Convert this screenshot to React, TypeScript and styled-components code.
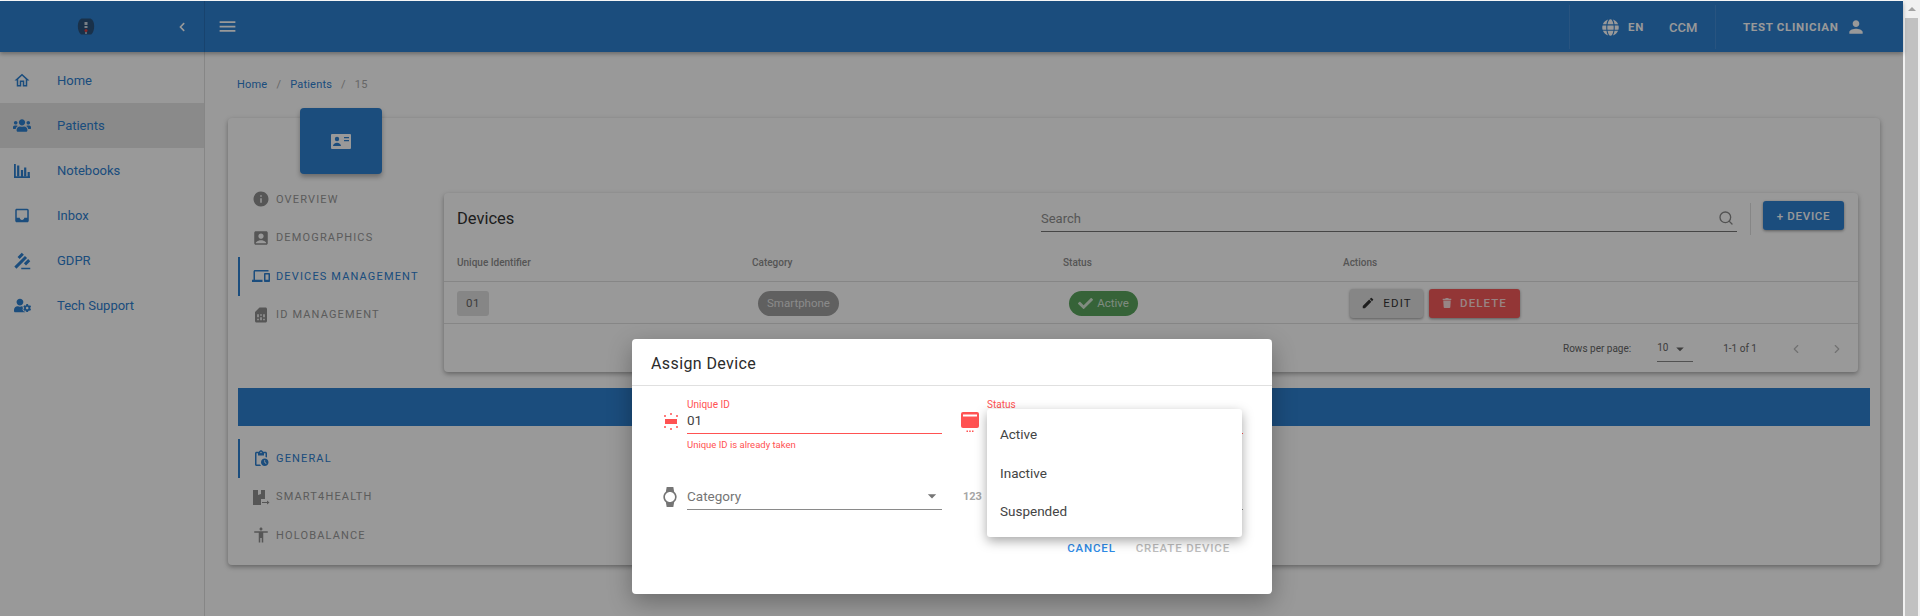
import React from "react";
import styled, { createGlobalStyle } from "styled-components";
import {
  MdMenu, MdPerson, MdOutlineHome, MdInbox, MdGavel, MdInfo, MdAccountBox,
  MdDevices, MdSimCard, MdOutlinePendingActions, MdAccessibility, MdWatch, MdEdit, MdArrowDropDown,
} from "react-icons/md";
import { FaGlobe, FaUsers, FaUserCog, FaTrash, FaCheck, FaChevronLeft } from "react-icons/fa";
import { FiChevronLeft, FiChevronRight, FiSearch } from "react-icons/fi";

const BLUE = "#2e80d1";

const Global = createGlobalStyle`
  html, body { margin: 0; padding: 0; height: 616px; overflow: hidden; background: #fff; }
  body { font-family: Roboto, "Liberation Sans", sans-serif; }
  * { box-sizing: border-box; }
`;

const Screen = styled.div`
  display: flex;
  width: 1920px;
  height: 616px;
  position: relative;
  overflow: hidden;
`;
const Viewport = styled.div`
  width: 1903px;
  height: 616px;
  position: relative;
  padding-top: 1px;
  background: #fff;
  display: flex;
  flex-direction: column;
`;
const ScrollTrack = styled.div`
  width: 17px;
  background: #f1f1f1;
  display: flex;
  flex-direction: column;
  align-items: center;
`;
const ScrollUp = styled.div`
  width: 17px;
  height: 18px;
  display: flex;
  align-items: center;
  justify-content: center;
  &::before {
    content: "";
    border-left: 4px solid transparent;
    border-right: 4px solid transparent;
    border-bottom: 4px solid #a3a3a3;
  }
`;
const ScrollThumb = styled.div`
  width: 13px;
  flex: 1;
  background: #c1c1c1;
`;

const TopBar = styled.header`
  height: 51px;
  background: ${BLUE};
  display: flex;
  align-items: stretch;
  padding-right: 27px;
  box-shadow: 0 2px 4px rgba(0, 0, 0, 0.3);
  position: relative;
  z-index: 1;
  flex: none;
`;
const Brand = styled.div`
  width: 205px;
  border-right: 1px solid rgba(0, 0, 0, 0.12);
  display: flex;
  align-items: center;
  padding-left: 77px;
  padding-right: 17px;
  justify-content: space-between;
  color: #fff;
`;
const MenuBtn = styled.div`
  display: flex;
  align-items: center;
  padding-left: 12px;
  color: #fff;
  flex: 1;
`;
const TopSection = styled.div<{ $w: number }>`
  width: ${(p) => p.$w}px;
  margin: 4px 0 3px;
  border-left: 1px solid rgba(255, 255, 255, 0.1);
  display: flex;
  align-items: center;
  color: #fff;
  font-size: 11.5px;
  font-weight: 700;
  letter-spacing: 0.7px;
`;
const LangGroup = styled.div`
  display: flex;
  align-items: center;
  gap: 9px;
  margin-left: 32px;
`;
const CcmLabel = styled.span`
  margin-left: 25px;
  font-size: 13px;
  letter-spacing: 0;
  font-weight: 500;
`;
const UserGroup = styled.div`
  display: flex;
  align-items: center;
  gap: 7px;
  margin-left: 27px;
`;

const Body = styled.div`
  display: flex;
  flex: 1;
  min-height: 0;
`;
const Sidebar = styled.nav`
  width: 205px;
  flex: none;
  border-right: 1px solid rgba(0, 0, 0, 0.12);
  padding-top: 6px;
`;
const SideItem = styled.div<{ $active?: boolean }>`
  height: 45px;
  display: flex;
  align-items: center;
  padding-left: 13px;
  gap: 19px;
  color: ${BLUE};
  font-size: 13px;
  background: ${(p) => (p.$active ? "#e6e6e6" : "transparent")};
`;
const SideIcon = styled.span`
  width: 18px;
  height: 18px;
  display: flex;
  align-items: center;
  justify-content: center;
  flex: none;
  margin-right: 7px;
`;
const GavelIcon = styled(MdGavel)`
  transform: scaleX(-1);
`;
const Main = styled.main`
  flex: 1;
  padding: 0 23px;
  min-width: 0;
`;
const Crumbs = styled.div`
  display: flex;
  height: 66px;
  align-items: center;
  padding: 0 0 2px 9px;
  font-size: 11px;
  letter-spacing: 0.2px;
  gap: 9px;
  color: ${BLUE};
`;
const CrumbMuted = styled.span`
  color: #aaa;
`;
const Card = styled.section`
  display: flow-root;
  background: #fff;
  border-radius: 4px;
  box-shadow: 0 2px 5px rgba(0, 0, 0, 0.35);
  padding: 0 10px 12px;
  height: 447px;
`;
const Tile = styled.div`
  width: 82px;
  height: 66px;
  margin: -10px 0 0 62px;
  background: ${BLUE};
  border-radius: 4px;
  box-shadow: 0 3px 5px rgba(0, 0, 0, 0.3);
  display: flex;
  align-items: center;
  justify-content: center;
`;
const Split = styled.div`
  display: flex;
  margin-top: 6px;
  height: 192px;
`;
const TabCol = styled.div`
  width: 206px;
  flex: none;
`;
const Tab = styled.div<{ $active?: boolean }>`
  height: 38.5px;
  display: flex;
  align-items: center;
  border-left: 2px solid ${(p) => (p.$active ? BLUE : "transparent")};
  padding-left: 12px;
  gap: 6px;
  font-size: 11px;
  font-weight: 400;
  letter-spacing: 1.15px;
  color: ${(p) => (p.$active ? BLUE : "#999")};
`;
const TabIcon = styled.span<{ $active?: boolean }>`
  width: 18px;
  height: 18px;
  font-size: 18px;
  display: flex;
  align-items: center;
  justify-content: center;
  flex: none;
  color: ${(p) => (p.$active ? BLUE : "#8f8f8f")};
`;
const Panel = styled.div`
  width: 1414px;
  margin-top: 13px;
  height: 179px;
  background: #fff;
  border-radius: 4px;
  box-shadow: 0 2px 5px rgba(0, 0, 0, 0.35);
`;
const PanelBar = styled.div`
  height: 52px;
  display: flex;
  align-items: flex-start;
  padding-left: 13px;
`;
const PanelTitle = styled.div`
  width: 584px;
  font-size: 16.5px;
  color: #333;
  padding-top: 16px;
`;
const SearchBox = styled.div`
  width: 696px;
  height: 31px;
  margin-top: 8px;
  border-bottom: 1px solid #757575;
  display: flex;
  align-items: center;
  justify-content: space-between;
  font-size: 13px;
  color: #8f8f8f;
  padding-top: 4px;
  padding-right: 3px;
`;
const SearchIcon = styled(FiSearch)`
  color: #8a8a8a;
`;
const VRule = styled.div`
  width: 1px;
  height: 32px;
  background: #e0e0e0;
  margin: 10px 12px 0 13px;
`;
const AddBtn = styled.div`
  width: 81px;
  height: 29px;
  margin-top: 8px;
  background: ${BLUE};
  color: #fff;
  border-radius: 3px;
  box-shadow: 0 1px 3px rgba(0, 0, 0, 0.4);
  font-size: 11.5px;
  font-weight: 500;
  letter-spacing: 0.7px;
  display: flex;
  align-items: center;
  justify-content: center;
`;
const Row = styled.div<{ $h: number; $pt?: number; $pb?: number }>`
  height: ${(p) => p.$h}px;
  padding-top: ${(p) => p.$pt ?? 0}px;
  padding-bottom: ${(p) => p.$pb ?? 0}px;
  display: grid;
  grid-template-columns: 295px 311px 280px 1fr;
  align-items: center;
  padding-left: 13px;
  border-bottom: 1px solid #e0e0e0;
`;
const HeadCell = styled.div`
  font-size: 10px;
  font-weight: 500;
  color: #8e8e8e;
`;
const IdChip = styled.div`
  width: 32px;
  height: 25px;
  background: #e0e0e0;
  border-radius: 3px;
  color: #666;
  font-size: 11.5px;
  display: flex;
  align-items: center;
  justify-content: center;
  letter-spacing: 0.5px;
`;
const Pill = styled.div<{ $bg: string; $w: number }>`
  width: ${(p) => p.$w}px;
  height: 25px;
  margin-left: 6px;
  border-radius: 13px;
  background: ${(p) => p.$bg};
  color: rgba(255, 255, 255, 0.75);
  font-size: 11.5px;
  display: flex;
  align-items: center;
  justify-content: center;
  gap: 4px;
`;
const Actions = styled.div`
  display: flex;
  gap: 6px;
  margin-left: 7px;
`;
const ActionBtn = styled.div<{ $bg: string; $fg: string; $w: number; $weight?: number }>`
  width: ${(p) => p.$w}px;
  height: 29px;
  border-radius: 3px;
  background: ${(p) => p.$bg};
  color: ${(p) => p.$fg};
  box-shadow: 0 1px 3px rgba(0, 0, 0, 0.4);
  font-size: 11.5px;
  font-weight: ${(p) => p.$weight ?? 400};
  letter-spacing: 1.1px;
  display: flex;
  align-items: center;
  justify-content: center;
  gap: 8px;
`;
const Pager = styled.div`
  height: 47px;
  display: flex;
  align-items: center;
  padding-left: 1119px;
  padding-top: 2px;
  font-size: 10px;
  color: #666;
  position: relative;
`;
const PageSize = styled.div`
  margin-left: 26px;
  width: 36px;
  height: 26px;
  padding-top: 6px;
  border-bottom: 1px solid #888;
  display: flex;
  gap: 3px;
  align-items: flex-start;
`;
const SizeCaret = styled(MdArrowDropDown)`
  margin-top: -2px;
`;
const PageRange = styled.span`
  margin-left: 30px;
`;
const PageArrow = styled.span<{ $gap: number }>`
  margin-left: ${(p) => p.$gap}px;
  display: flex;
  color: #bdbdbd;
`;
const Band = styled.div`
  height: 38px;
  margin-top: 16px;
  background: ${BLUE};
`;
const BottomTabs = styled.div`
  padding-top: 13px;
`;

const Backdrop = styled.div`
  position: absolute;
  inset: 1px 0 0 0;
  z-index: 5;
  background: rgba(0, 0, 0, 0.4);
`;
const Dialog = styled.div`
  position: absolute;
  z-index: 6;
  left: 632px;
  top: 339px;
  width: 640px;
  height: 255px;
  background: #fff;
  border-radius: 4px;
  box-shadow: 0 8px 24px rgba(0, 0, 0, 0.3);
`;
const DialogTitle = styled.div`
  height: 47px;
  border-bottom: 1px solid #e0e0e0;
  padding: 2px 19px 0;
  display: flex;
  align-items: center;
  font-size: 16px;
  font-weight: 400;
  letter-spacing: 0.4px;
  color: #2b2b2b;
`;
const FormGrid = styled.div`
  display: grid;
  grid-template-columns: 255px 256px;
  column-gap: 45px;
  padding: 12px 0 0 55px;
`;
const Field = styled.div<{ $h: number }>`
  position: relative;
  height: ${(p) => p.$h}px;
`;
const FieldIcon = styled.span<{ $top: number; $left: number; $color?: string }>`
  position: absolute;
  left: ${(p) => p.$left}px;
  top: ${(p) => p.$top}px;
  color: ${(p) => p.$color || "#757575"};
  display: flex;
`;
const DigitsIcon = styled(FieldIcon)`
  font-size: 11px;
  font-weight: 700;
  color: #a6a6a6;
`;
const FieldLabel = styled.div`
  height: 13px;
  font-size: 10px;
  line-height: 13px;
  color: #ff5252;
`;
const FieldValue = styled.div<{ $error?: boolean; $muted?: boolean }>`
  height: 23px;
  border-bottom: 1px solid ${(p) => (p.$error ? "#ff5252" : "#8a8a8a")};
  font-size: 13.5px;
  color: ${(p) => (p.$muted ? "#757575" : "#444")};
  display: flex;
  align-items: center;
  justify-content: space-between;
  padding-bottom: 4px;
`;
const FieldError = styled.div`
  font-size: 9.5px;
  color: #ff5252;
  margin-top: 5px;
`;
const DialogActions = styled.div`
  position: absolute;
  right: 42px;
  top: 202px;
  display: flex;
  gap: 20px;
  font-size: 11.5px;
  font-weight: 500;
  letter-spacing: 0.85px;
`;
const ActionLink = styled.span<{ $on?: boolean }>`
  color: ${(p) => (p.$on ? "#2f8be6" : "#bdbdbd")};
`;
const Menu = styled.div`
  position: absolute;
  z-index: 7;
  left: 987px;
  top: 409px;
  width: 255px;
  height: 128px;
  padding-top: 6px;
  background: #fff;
  border-radius: 3px;
  box-shadow: 0 4px 12px rgba(0, 0, 0, 0.35);
`;
const MenuItem = styled.div`
  height: 38.5px;
  display: flex;
  align-items: center;
  padding-left: 13px;
  font-size: 13.5px;
  color: #444;
`;

const Logo = () => (
  <svg width="18" height="17" viewBox="0 0 17 17">
    <path d="M4 .5h9c2 .8 3.700 3.500 3.700 7.500s-1 6.500-3 8.500H3.500c-2-2-3.200-4.500-3.200-8.500S2 1.300 4 .5z" fill="#2a527c" />
    <path d="M7 4h3v3H7zM7 8h3v2H7z" fill="#c8d4e0" />
    <circle cx="8.500" cy="12.500" r="1.500" fill="#e04040" />
    <rect x="7.800" y="14" width="1.400" height="2" fill="#c8d4e0" />
  </svg>
);
const IdCardGlyph = () => (
  <svg width="20" height="15" viewBox="0 0 20 15" fill="#fff">
    <path fillRule="evenodd" d="M1 0h18a1 1 0 0 1 1 1v13a1 1 0 0 1-1 1H1a1 1 0 0 1-1-1V1a1 1 0 0 1 1-1zm12 3v1.200h5V3zm0 3v1.200h5V6z" />
    <circle cx="6" cy="5" r="2.200" fill={BLUE} />
    <path d="M2 12c0-2 2-3.300 4-3.300s4 1.300 4 3.300z" fill={BLUE} />
  </svg>
);
const ChartGlyph = () => (
  <svg width="16" height="14" viewBox="0 0 16 14" fill="currentColor">
    <rect x="0" y="0" width="1.800" height="14" />
    <rect x="0" y="12.300" width="16" height="1.700" />
    <rect x="3.100" y="1.500" width="2.200" height="11" />
    <rect x="6.900" y="6" width="2.200" height="7" />
    <rect x="10.100" y="3.500" width="2.200" height="9" />
    <rect x="13.600" y="8" width="2.200" height="5" />
  </svg>
);
const PhoneGlyph = () => (
  <svg width="18" height="18" viewBox="0 0 18 18" fill="currentColor">
    <path d="M1 2h5v5l3-1V2h4v9H9v6H1z" />
    <path d="M10 14h5v-1.500l2.500 2-2.500 2V15h-5z" />
  </svg>
);
const IdMarker = () => (
  <svg width="14" height="18" viewBox="0 0 14 18" fill="currentColor">
    <rect x="1" y="6" width="12" height="5" />
    <g opacity="0.75">
      <rect x="6" y="0" width="2" height="2" />
      <rect x="6" y="15" width="2" height="2" />
      <rect x="0" y="2" width="2" height="2" />
      <rect x="12" y="2" width="2" height="2" />
      <rect x="0" y="13" width="2" height="2" />
      <rect x="12" y="13" width="2" height="2" />
    </g>
  </svg>
);
const StatusMarker = () => (
  <svg width="18" height="21" viewBox="0 0 18 21" fill="currentColor">
    <rect x="0" y="0" width="18" height="16" rx="2" />
    <rect x="2" y="2.500" width="14" height="2" fill="#fff" />
    <rect x="5.500" y="18.500" width="1.500" height="1.500" />
    <rect x="8.200" y="18.500" width="1.500" height="1.500" />
    <rect x="11" y="18.500" width="1.500" height="1.500" />
  </svg>
);

const nav = [
  { label: "Home", icon: <MdOutlineHome size={21} /> },
  { label: "Patients", icon: <FaUsers size={19} />, active: true },
  { label: "Notebooks", icon: <ChartGlyph /> },
  { label: "Inbox", icon: <MdInbox size={19} /> },
  { label: "GDPR", icon: <GavelIcon size={18} /> },
  { label: "Tech Support", icon: <FaUserCog size={17} /> },
];
const topTabs = [
  { label: "OVERVIEW", icon: <MdInfo /> },
  { label: "DEMOGRAPHICS", icon: <MdAccountBox /> },
  { label: "DEVICES MANAGEMENT", icon: <MdDevices size={20} />, active: true },
  { label: "ID MANAGEMENT", icon: <MdSimCard /> },
];
const lowerTabs = [
  { label: "GENERAL", icon: <MdOutlinePendingActions size={19} />, active: true },
  { label: "SMART4HEALTH", icon: <PhoneGlyph /> },
  { label: "HOLOBALANCE", icon: <MdAccessibility /> },
];

export default function App() {
  return (
    <Screen>
      <Global />
      <Viewport>
        <TopBar>
          <Brand>
            <Logo />
            <FaChevronLeft size={10} />
          </Brand>
          <MenuBtn>
            <MdMenu size={21} />
          </MenuBtn>
          <TopSection $w={146}>
            <LangGroup>
              <FaGlobe size={17} />
              <span>EN</span>
            </LangGroup>
            <CcmLabel>CCM</CcmLabel>
          </TopSection>
          <TopSection $w={161}>
            <UserGroup>
              <span>TEST CLINICIAN</span>
              <MdPerson size={20} />
            </UserGroup>
          </TopSection>
        </TopBar>
        <Body>
          <Sidebar>
            {nav.map((n) => (
              <SideItem key={n.label} $active={n.active}>
                <SideIcon>{n.icon}</SideIcon>
                {n.label}
              </SideItem>
            ))}
          </Sidebar>
          <Main>
            <Crumbs>
              <span>Home</span>
              <CrumbMuted>/</CrumbMuted>
              <span>Patients</span>
              <CrumbMuted>/</CrumbMuted>
              <CrumbMuted>15</CrumbMuted>
            </Crumbs>
            <Card>
              <Tile>
                <IdCardGlyph />
              </Tile>
              <Split>
                <TabCol>
                  {topTabs.map((t) => (
                    <Tab key={t.label} $active={t.active}>
                      <TabIcon $active={t.active}>{t.icon}</TabIcon>
                      {t.label}
                    </Tab>
                  ))}
                </TabCol>
                <Panel>
                  <PanelBar>
                    <PanelTitle>Devices</PanelTitle>
                    <SearchBox>
                      <span>Search</span>
                      <SearchIcon size={16} />
                    </SearchBox>
                    <VRule />
                    <AddBtn>+ DEVICE</AddBtn>
                  </PanelBar>
                  <Row $h={37} $pb={2}>
                    <HeadCell>Unique Identifier</HeadCell>
                    <HeadCell>Category</HeadCell>
                    <HeadCell>Status</HeadCell>
                    <HeadCell>Actions</HeadCell>
                  </Row>
                  <Row $h={42} $pt={1}>
                    <IdChip>01</IdChip>
                    <Pill $bg="#a0a0a0" $w={81}>Smartphone</Pill>
                    <Pill $bg="#5aa65e" $w={69}>
                      <FaCheck size={15} />
                      Active
                    </Pill>
                    <Actions>
                      <ActionBtn $bg="#e0e0e0" $fg="#333" $w={73}>
                        <MdEdit size={14} />
                        EDIT
                      </ActionBtn>
                      <ActionBtn $bg="#f65a5a" $fg="rgba(255,255,255,.8)" $w={91} $weight={500}>
                        <FaTrash size={10} />
                        DELETE
                      </ActionBtn>
                    </Actions>
                  </Row>
                  <Pager>
                    <span>Rows per page:</span>
                    <PageSize>
                      10
                      <SizeCaret size={18} />
                    </PageSize>
                    <PageRange>1-1 of 1</PageRange>
                    <PageArrow $gap={32}><FiChevronLeft size={14} /></PageArrow>
                    <PageArrow $gap={27}><FiChevronRight size={14} /></PageArrow>
                  </Pager>
                </Panel>
              </Split>
              <Band />
              <BottomTabs>
                {lowerTabs.map((t) => (
                  <Tab key={t.label} $active={t.active}>
                    <TabIcon $active={t.active}>{t.icon}</TabIcon>
                    {t.label}
                  </Tab>
                ))}
              </BottomTabs>
            </Card>
          </Main>
        </Body>
        <Backdrop />
        <Dialog>
          <DialogTitle>Assign Device</DialogTitle>
          <FormGrid>
            <Field $h={89}>
              <FieldIcon $left={-23} $top={15} $color="#ff5252"><IdMarker /></FieldIcon>
              <FieldLabel>Unique ID</FieldLabel>
              <FieldValue $error>01</FieldValue>
              <FieldError>Unique ID is already taken</FieldError>
            </Field>
            <Field $h={89}>
              <FieldIcon $left={-26} $top={14} $color="#ff5252"><StatusMarker /></FieldIcon>
              <FieldLabel>Status</FieldLabel>
              <FieldValue $error />
            </Field>
            <Field $h={36}>
              <FieldIcon $left={-27} $top={0}><MdWatch size={20} /></FieldIcon>
              <FieldValue $muted>
                Category
                <MdArrowDropDown size={20} />
              </FieldValue>
            </Field>
            <Field $h={36}>
              <DigitsIcon $left={-24} $top={3}>123</DigitsIcon>
              <FieldValue $muted />
            </Field>
          </FormGrid>
          <DialogActions>
            <ActionLink $on>CANCEL</ActionLink>
            <ActionLink>CREATE DEVICE</ActionLink>
          </DialogActions>
        </Dialog>
        <Menu>
          <MenuItem>Active</MenuItem>
          <MenuItem>Inactive</MenuItem>
          <MenuItem>Suspended</MenuItem>
        </Menu>
      </Viewport>
      <ScrollTrack>
        <ScrollUp />
        <ScrollThumb />
      </ScrollTrack>
    </Screen>
  );
}
